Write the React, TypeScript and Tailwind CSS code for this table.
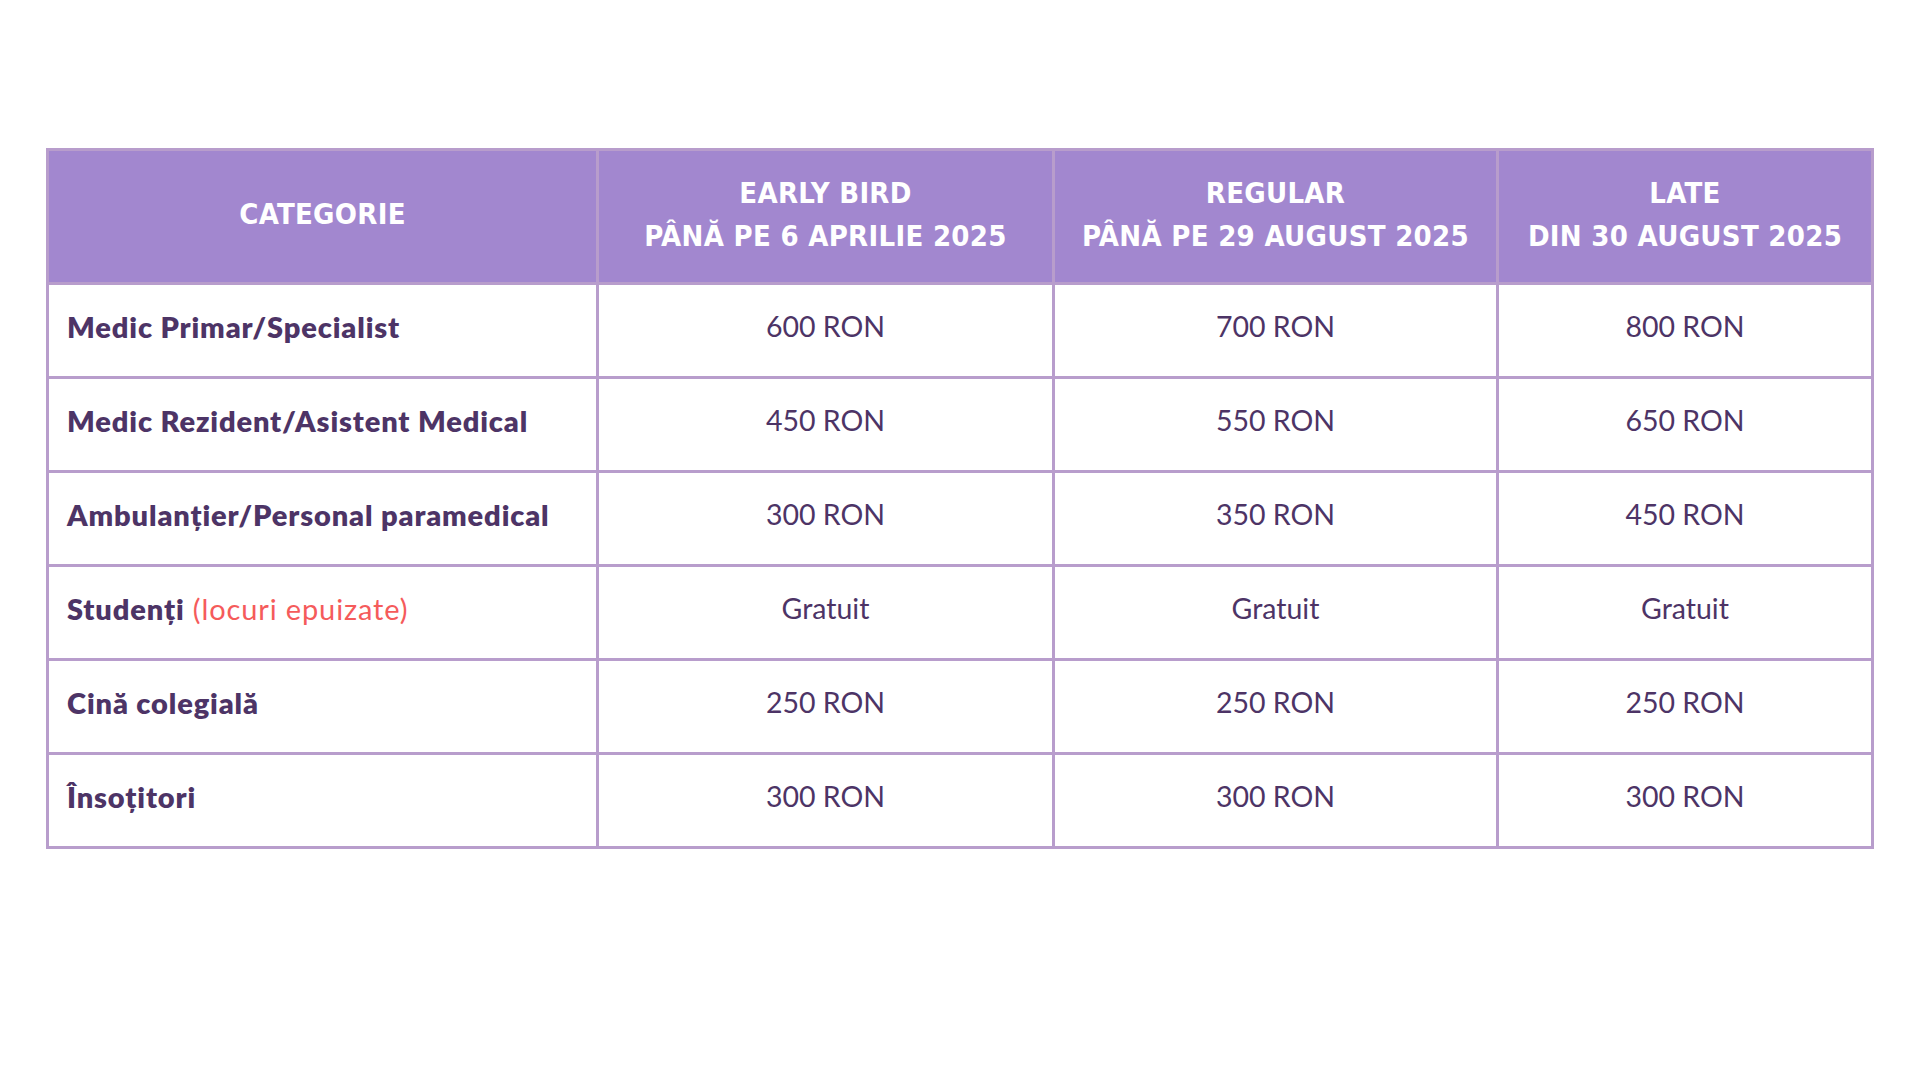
const rows = [
  { name: "Medic Primar/Specialist", prices: ["600 RON", "700 RON", "800 RON"] },
  { name: "Medic Rezident/Asistent Medical", prices: ["450 RON", "550 RON", "650 RON"] },
  { name: "Ambulanțier/Personal paramedical", prices: ["300 RON", "350 RON", "450 RON"] },
  { name: "Studenți", note: "(locuri epuizate)", prices: ["Gratuit", "Gratuit", "Gratuit"] },
  { name: "Cină colegială", prices: ["250 RON", "250 RON", "250 RON"] },
  { name: "Însoțitori", prices: ["300 RON", "300 RON", "300 RON"] },
];

const headFont = "font-['DejaVu_Sans_Condensed',sans-serif]";
const bodyFont = "font-['Lato',sans-serif]";

export default function App() {
  return (
    <div className="min-h-[1080px] bg-white px-[46px] pt-[148px]">
      <table className="w-full table-fixed border-collapse border-[3px] border-[#b89dcc]">
        <colgroup>
          <col className="w-[550px]" />
          <col className="w-[456px]" />
          <col className="w-[444px]" />
          <col />
        </colgroup>
        <thead>
          <tr className={`h-[134px] bg-[#a287cf] text-white ${headFont} text-[29px] font-bold leading-[43px] tracking-[0.01em]`}>
            <th className="border-[3px] border-[#b89dcc] pb-[4px] font-bold">CATEGORIE</th>
            <th className="border-[3px] border-[#b89dcc] pb-[4px] font-bold">
              EARLY BIRD
              <br />
              PÂNĂ PE 6 APRILIE 2025
            </th>
            <th className="border-[3px] border-[#b89dcc] pb-[4px] font-bold">
              REGULAR
              <br />
              PÂNĂ PE 29 AUGUST 2025
            </th>
            <th className="border-[3px] border-[#b89dcc] pb-[4px] font-bold">
              LATE
              <br />
              DIN 30 AUGUST 2025
            </th>
          </tr>
        </thead>
        <tbody className={`${bodyFont} text-[#4d3466]`}>
          {rows.map((r) => (
            <tr key={r.name} className="h-[94px]">
              <td className="border-[3px] border-[#b89dcc] pb-[8px] pl-[18px] text-[29px] font-extrabold tracking-[0.03em]">
                {r.name}
                {r.note && <span className="font-normal text-[#f55b5b]"> {r.note}</span>}
              </td>
              {r.prices.map((p, i) => (
                <td key={i} className="border-[3px] border-[#b89dcc] pb-[8px] text-center text-[28.5px]">
                  {p}
                </td>
              ))}
            </tr>
          ))}
        </tbody>
      </table>
    </div>
  );
}
